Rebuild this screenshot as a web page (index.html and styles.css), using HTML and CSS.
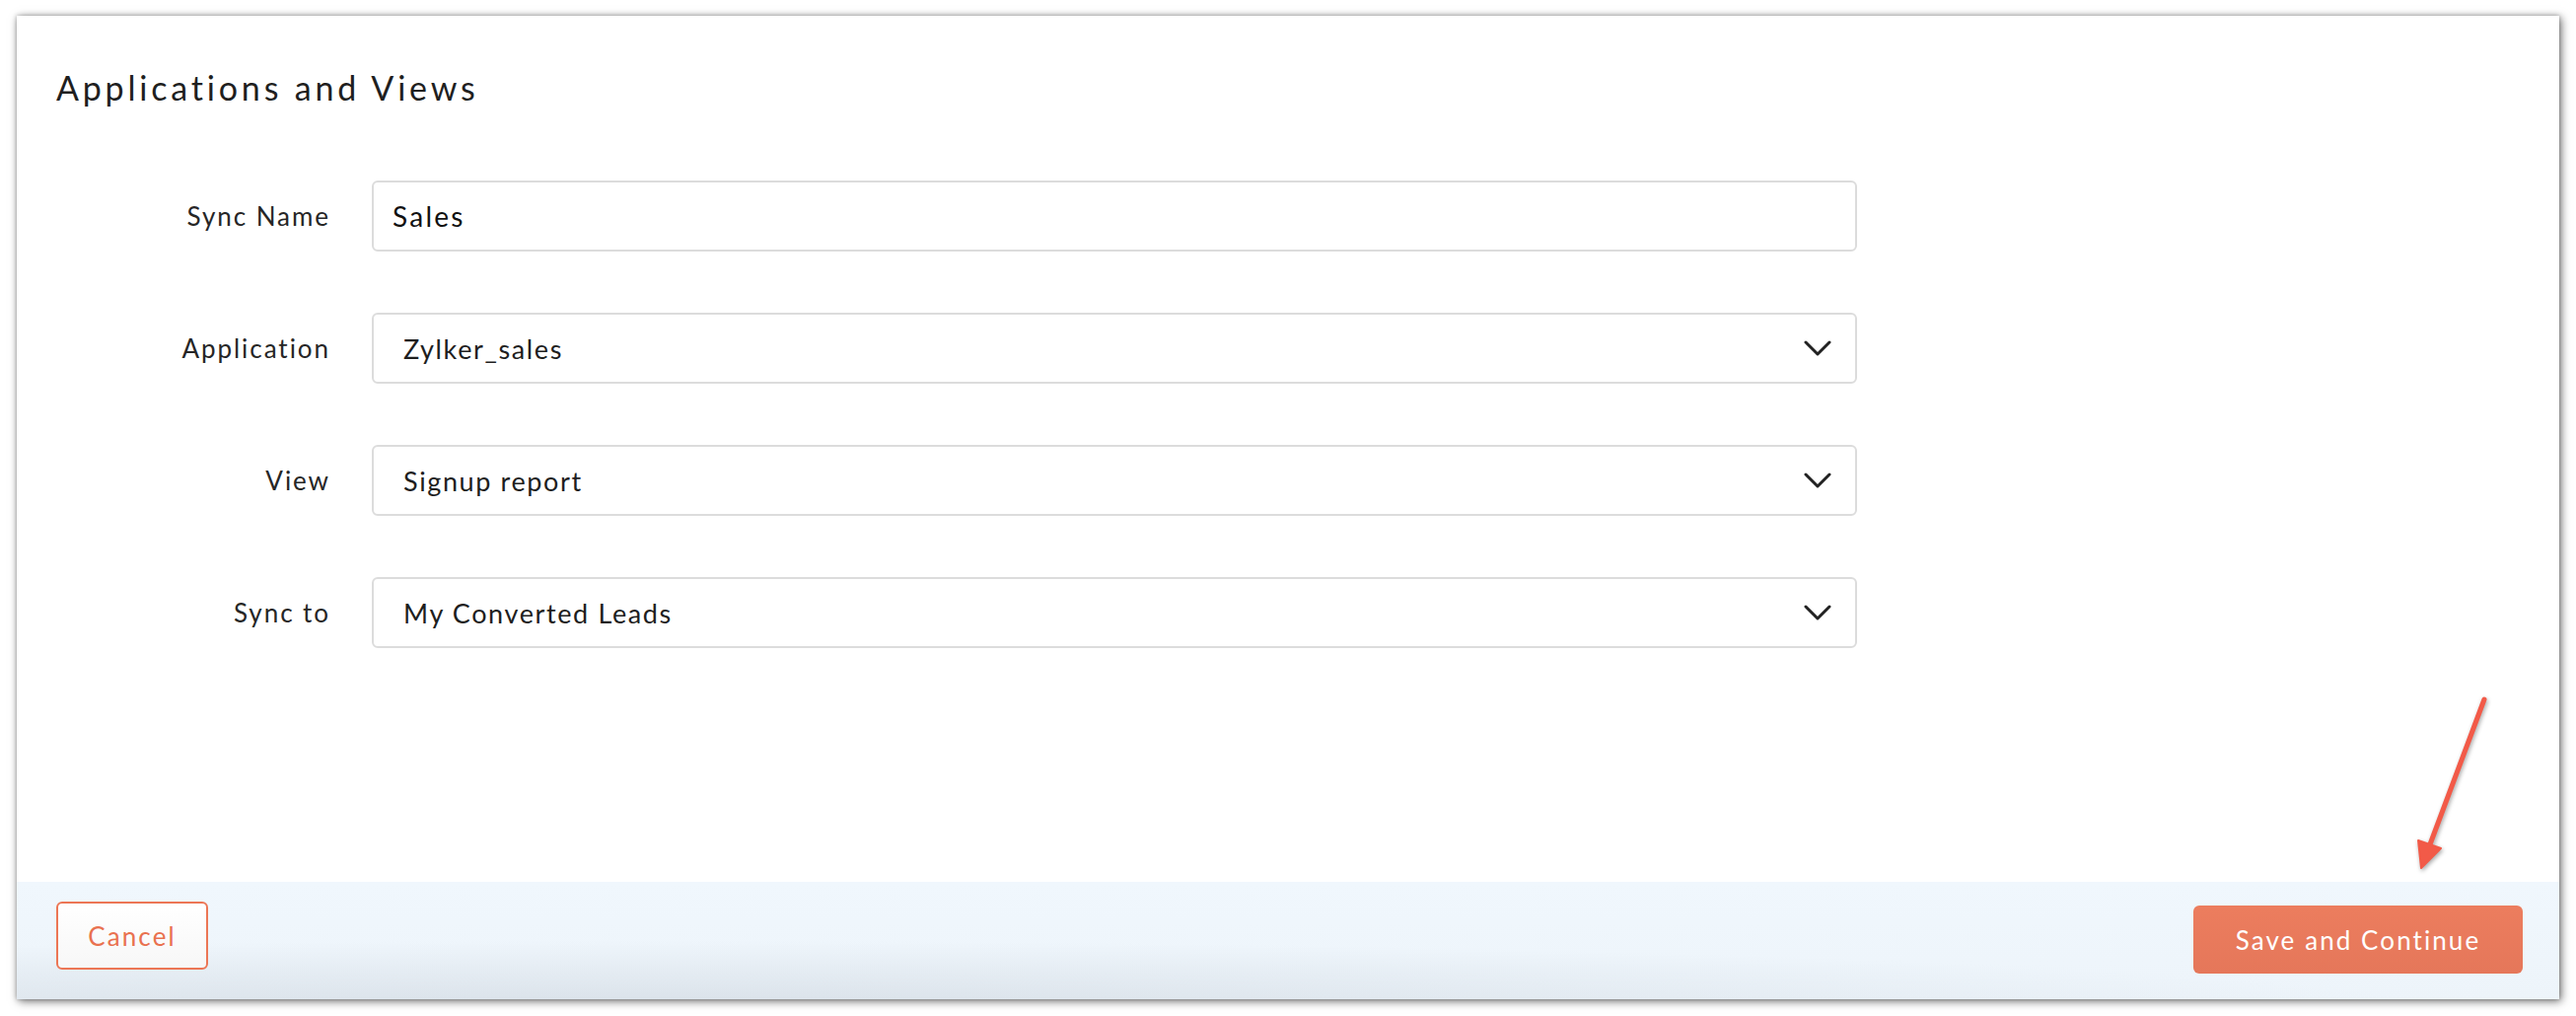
FILE: index.html
```html
<!DOCTYPE html>
<html lang="en">
<head>
<meta charset="utf-8">
<title>Applications and Views</title>
<link rel="stylesheet" href="styles.css">
</head>
<body>
<div class="panel">
  <div class="content">
    <h1 class="title">Applications and Views</h1>
    <div class="form">
      <label class="label">Sync Name</label>
      <div class="field input"><span class="value-input">Sales</span></div>

      <label class="label">Application</label>
      <div class="field select"><span class="value">Zylker_sales</span>
        <svg class="chev" viewBox="0 0 28 17" width="28" height="17"><polyline points="2,2 14,14 26,2" fill="none" stroke="#222" stroke-width="3" stroke-linecap="round" stroke-linejoin="round"/></svg>
      </div>

      <label class="label">View</label>
      <div class="field select"><span class="value">Signup report</span>
        <svg class="chev" viewBox="0 0 28 17" width="28" height="17"><polyline points="2,2 14,14 26,2" fill="none" stroke="#222" stroke-width="3" stroke-linecap="round" stroke-linejoin="round"/></svg>
      </div>

      <label class="label">Sync to</label>
      <div class="field select"><span class="value">My Converted Leads</span>
        <svg class="chev" viewBox="0 0 28 17" width="28" height="17"><polyline points="2,2 14,14 26,2" fill="none" stroke="#222" stroke-width="3" stroke-linecap="round" stroke-linejoin="round"/></svg>
      </div>
    </div>
  </div>
  <div class="footer">
    <button class="btn btn-cancel">Cancel</button>
    <button class="btn btn-save">Save and Continue</button>
  </div>
</div>
<svg class="arrow" viewBox="0 0 110 210" width="110" height="210">
  <line x1="89" y1="19" x2="34" y2="166" stroke="#f25a48" stroke-width="5" stroke-linecap="round"/>
  <polygon points="25,190 45,170 22,162" fill="#f25a48" stroke="#f25a48" stroke-width="2" stroke-linejoin="round"/>
</svg>
</body>
</html>
```
FILE: styles.css
```css
html, body {
  margin: 0;
  padding: 0;
  background: #ffffff;
}
body {
  font-family: "Lato", "Open Sans", Arial, sans-serif;
  color: #2b2b2b;
  position: relative;
  width: 2612px;
  height: 1030px;
  overflow: hidden;
}
.panel {
  margin: 16px 0 0 17px;
  width: 2578px;
  height: 997px;
  background: #ffffff;
  display: flex;
  flex-direction: column;
  box-shadow: 2px 2px 9px rgba(0, 0, 0, 0.55), 0 0 4px rgba(0, 0, 0, 0.25);
}
.content {
  flex: 1;
  padding: 52px 0 0 40px;
}
.title {
  margin: 0;
  font-size: 34px;
  line-height: 42px;
  font-weight: 400;
  letter-spacing: 0.112em;
  color: #1f1f1f;
}
.form {
  margin-top: 73px;
  display: grid;
  grid-template-columns: 278px 1506px;
  grid-auto-rows: 72px;
  column-gap: 42px;
  row-gap: 62px;
}
.label {
  display: flex;
  align-items: center;
  justify-content: flex-end;
  font-size: 26px;
  letter-spacing: 0.075em;
  color: #262626;
}
.field {
  box-sizing: border-box;
  border: 2px solid #dcdcdc;
  border-radius: 6px;
  display: flex;
  align-items: center;
  background: #fff;
}
.input {
  padding-left: 19px;
}
.value-input {
  font-size: 28px;
  letter-spacing: 0.08em;
  color: #111;
}
.select {
  padding: 0 24px 0 30px;
  justify-content: space-between;
}
.value {
  font-size: 27px;
  letter-spacing: 0.06em;
  color: #1e1e1e;
}
.chev {
  display: block;
}
.footer {
  height: 119px;
  box-sizing: border-box;
  padding: 20px 37px 0 40px;
  display: flex;
  justify-content: space-between;
  align-items: flex-start;
  background:
    radial-gradient(ellipse 70% 60% at 25% 110%, rgba(214, 222, 230, 0.9) 0%, rgba(214, 222, 230, 0) 100%),
    linear-gradient(#f0f7fd, #edf4fa);
}
.btn {
  font-family: "Lato", "Open Sans", Arial, sans-serif;
  font-size: 26px;
  letter-spacing: 0.08em;
  border-radius: 6px;
  height: 69px;
  box-sizing: border-box;
  cursor: pointer;
}
.btn-cancel {
  width: 154px;
  border: 2px solid #ec7655;
  color: #e9714f;
  background: linear-gradient(#ffffff, #f7f7f7);
}
.btn-save {
  margin-top: 4px;
  width: 334px;
  border: none;
  color: #ffffff;
  background: linear-gradient(#ec7d5e, #e5775a);
}
.arrow {
  position: absolute;
  left: 2430px;
  top: 690px;
  filter: drop-shadow(1px 2px 2px rgba(0, 0, 0, 0.35));
}
```
